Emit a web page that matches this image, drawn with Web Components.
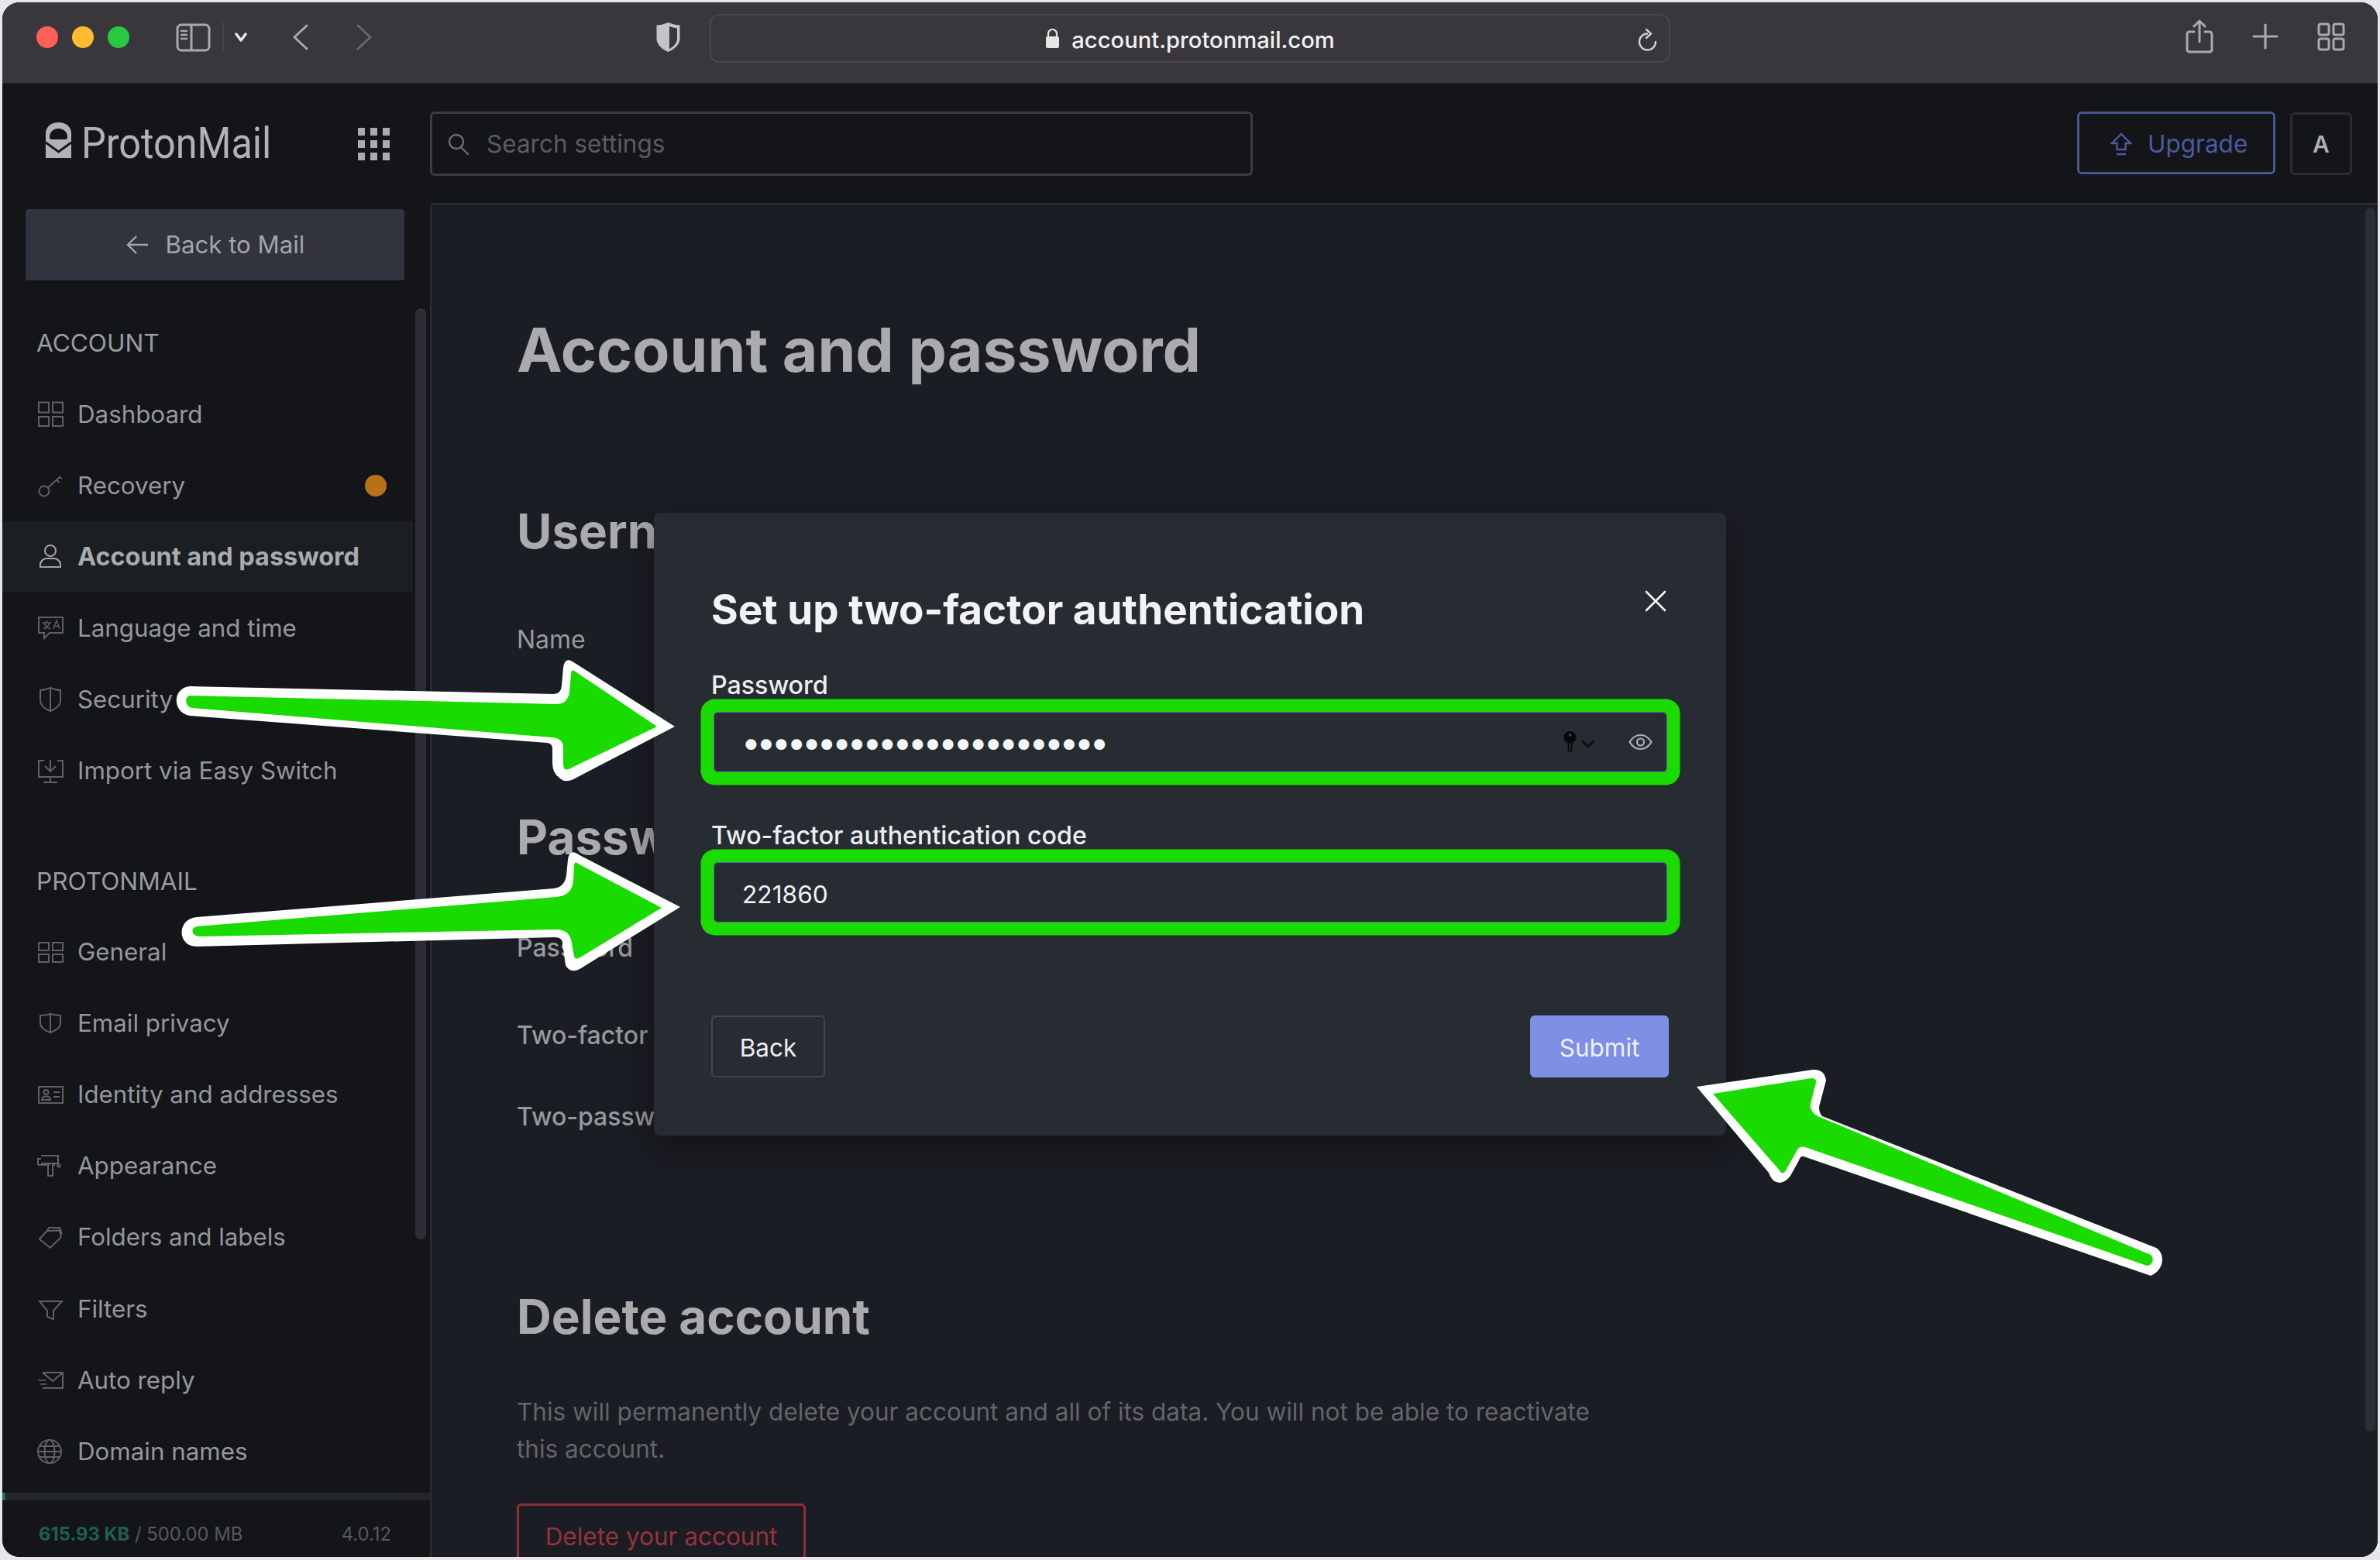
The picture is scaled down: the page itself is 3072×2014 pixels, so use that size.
<!DOCTYPE html>
<html lang="en"><head><meta charset="utf-8"><title>Account and password</title>
<style>
html,body{margin:0;padding:0;width:3072px;height:2014px;overflow:hidden;background:#e7e7e9;font-family:Inter,"Liberation Sans",sans-serif}
</style></head>
<body>
<browser-window>
  <mac-titlebar slot="bar" url="account.protonmail.com"></mac-titlebar>
  <app-header slot="header"></app-header>
  <side-nav slot="nav">
    <back-button>Back to Mail</back-button>
    <nav-label>ACCOUNT</nav-label>
    <nav-item icon="grid">Dashboard</nav-item>
    <nav-item icon="key" badge>Recovery</nav-item>
    <nav-item icon="user" active>Account and password</nav-item>
    <nav-item icon="lang">Language and time</nav-item>
    <nav-item icon="shield">Security</nav-item>
    <nav-item icon="import">Import via Easy Switch</nav-item>
    <nav-label style="margin-top:50px">PROTONMAIL</nav-label>
    <nav-item icon="grid2">General</nav-item>
    <nav-item icon="shield2">Email privacy</nav-item>
    <nav-item icon="card">Identity and addresses</nav-item>
    <nav-item icon="roller">Appearance</nav-item>
    <nav-item icon="tag">Folders and labels</nav-item>
    <nav-item icon="filter">Filters</nav-item>
    <nav-item icon="mail">Auto reply</nav-item>
    <nav-item icon="globe">Domain names</nav-item>
  </side-nav>
  <settings-panel slot="main"></settings-panel>
</browser-window>
<tfa-modal></tfa-modal>
<annotation-arrows></annotation-arrows>

<script>
const ICONS={
grid:'<rect x="3" y="2.5" width="13" height="13"/><rect x="21" y="2.5" width="13" height="13"/><rect x="3" y="21" width="13" height="12"/><rect x="21" y="21" width="13" height="12"/>',
grid2:'<rect x="3" y="6" width="13" height="10"/><rect x="21" y="6" width="13" height="10"/><rect x="3" y="21" width="13" height="10"/><rect x="21" y="21" width="13" height="10"/>',
key:'<circle cx="10" cy="25" r="6.5"/><path d="M15 20.5 31 6M26 10.5l3.5 3.5M30 7l3 2"/>',
user:'<circle cx="18" cy="10" r="7"/><path d="M5 31v-3c0-5 5-8 8-8h10c3 0 8 3 8 8v3Z"/>',
lang:'<path d="M3 4h31v20H17l-7 7v-7H3Z"/><path d="M8 11h11M13.5 8v3M10 11c1 4 5 7 8 8M17 11c-1 4-5 7-8 8M22 19l4-11 4 11M23.5 15.5h5" stroke-width="1.4"/>',
shield:'<path d="M18 3c5 2 9 3 13 3v13c0 7-7 12-13 14-6-2-13-7-13-14V6c4 0 8-1 13-3ZM18 3v30"/>',
shield2:'<path d="M18 6c5 1.500 9 2 13 2v10c0 6-7 10-13 12-6-2-13-6-13-12V8c4 0 8-.5 13-2ZM18 6v24"/>',
import:'<path d="M10 5H3v21h31V5h-7M18 4v15M11 12l7 7 7-7M18 26v7M9 33h18"/>',
card:'<rect x="3" y="8" width="31" height="21"/><circle cx="12.500" cy="15" r="3"/><path d="M7 25c0-3 2.500-4.500 5.500-4.500S18 22 18 25ZM22 15h8M22 21h8"/>',
roller:'<path d="M6 5h22v10H6M6 9H2v8M2 17h15M15 17v14h6V17h3"/><circle cx="29" cy="18" r="1.800"/>',
tag:'<path d="M4 20 14 10h16l2 6-1 4-14 12Z" transform="rotate(-3 18 20)"/><path d="M14 10l2-4h14l3 8"/>',
filter:'<path d="M4 8h29L22 20v11l-8-3v-8Z"/>',
mail:'<path d="M8 8h26v20H8M8 8l13 11L34 8"/><path d="M2 18h10M5 23h8M9 28h6" stroke-width="1.600"/>',
globe:'<circle cx="17" cy="18" r="15"/><ellipse cx="17" cy="18" rx="6.500" ry="15"/><path d="M2 18h30M4 11h26M4 25h26"/>'
};
const def=(n,html,extra)=>customElements.define(n,class extends HTMLElement{
  constructor(){super();const s=this.attachShadow({mode:'open'});s.innerHTML=typeof html==='function'?html(this):html;if(extra)extra.call(this,s)}
});

/* outer window */
def('browser-window',`<style>
:host{display:grid;position:absolute;left:3px;top:3px;width:3066px;height:2007px;grid-template-columns:552px 1fr;grid-template-rows:106px 153px 1fr;border-radius:22px;overflow:hidden;background:#131519}
.bar{grid-column:1/3}.header{grid-column:1/3}
</style>
<div class="bar"><slot name="bar"></slot></div>
<div class="header"><slot name="header"></slot></div>
<slot name="nav"></slot><slot name="main"></slot>`);

/* browser chrome */
customElements.define('mac-titlebar',class extends HTMLElement{
  connectedCallback(){
    if(this.shadowRoot)return;
    const s=this.attachShadow({mode:'open'});
    s.innerHTML=`<style>
    :host{display:flex;align-items:center;height:106px;background:#39373c;border-bottom:2px solid #1d1d20;box-sizing:border-box;position:relative;padding-bottom:14px;padding-left:44px;color:#a9a9ab}
    .dot{width:28px;height:28px;border-radius:50%;margin-right:18px}
    svg{display:block;fill:none;stroke:currentColor;stroke-linecap:round;stroke-linejoin:round;flex:none}
    .url{position:absolute;left:913px;top:15px;width:1240px;height:63px;box-sizing:border-box;border:2px solid #4a484d;border-radius:13px;display:flex;align-items:center;justify-content:center;gap:15px;color:#f0f0f0;font:500 29.200px Inter,"Liberation Sans",sans-serif;padding-top:3px}
    .reload{position:absolute;right:13px;top:17px;color:#d0d0d2}
    .right{position:absolute;left:2817px;top:22px;display:flex;align-items:center}
    </style>
    <span class="dot" style="background:#fe5f57"></span><span class="dot" style="background:#febc2e"></span><span class="dot" style="background:#28c840;margin-right:0"></span>
    <svg style="margin-left:60px" width="45" height="37" viewBox="0 0 45 37" stroke-width="3"><rect x="2" y="2" width="41" height="33" rx="5"/><path d="M20 2v33"/><path d="M7 10h7M7 15h7M7 20h7" stroke-width="2.500"/></svg>
    <svg style="margin-left:15px" width="2" height="40"><path d="M1 0v40" stroke="#4a484d" stroke-width="1.500"/></svg>
    <svg style="margin-left:14px;color:#e8e8e8" width="16" height="12" viewBox="0 0 16 12" stroke-width="3.500"><path d="M2 2l6 8 6-8"/></svg>
    <svg style="margin-left:58px" width="21" height="34" viewBox="0 0 21 34" stroke-width="3"><path d="M19 2 3 17l16 15"/></svg>
    <svg style="margin-left:62px;color:#67666a" width="21" height="34" viewBox="0 0 21 34" stroke-width="3"><path d="M2 2l16 15L2 32"/></svg>
    <svg style="margin-left:365px;stroke:none" width="33" height="40" viewBox="0 0 33 40"><path fill="#c4c4c6" d="M16.500 1c6 2.500 11 3.500 15 3.500V22c0 8-8 14-15 17-7-3-15-9-15-17V4.500C5.500 4.500 10.500 3.500 16.500 1Z"/><path fill="#39373c" d="M18 6c4 1.500 7 2 10 2.300V22c0 6-5 10.500-10 13.200Z"/></svg>
    <div class="url"><svg style="stroke:none;margin-top:-3px" width="19" height="27" viewBox="0 0 19 27"><path d="M4 12V7.500a5.500 5.500 0 0 1 11 0V12" fill="none" stroke="#e6e6e6" stroke-width="2.200"/><rect x="1" y="11" width="17" height="15" rx="2" fill="#e6e6e6"/></svg><span>${this.getAttribute('url')}</span>
      <svg class="reload" width="28" height="30" viewBox="0 0 28 30" stroke-width="2.400"><path d="M13 6.500A10.500 10.500 0 1 0 24 17"/><path d="M12 1 18 6.500 12 12"/></svg></div>
    <div class="right">
      <svg width="38" height="44" viewBox="0 0 38 44" stroke-width="3"><path d="M12 16H6a3 3 0 0 0-3 3v20a3 3 0 0 0 3 3h26a3 3 0 0 0 3-3V19a3 3 0 0 0-3-3h-6M19 29V3M12 9l7-7 7 7"/></svg>
      <svg style="margin-left:49px" width="34" height="34" viewBox="0 0 34 34" stroke-width="3.200"><path d="M17 2v30M2 17h30"/></svg>
      <svg style="margin-left:50px" width="36" height="37" viewBox="0 0 36 37" stroke-width="3"><rect x="2" y="2" width="13" height="14" rx="2.500"/><rect x="21" y="2" width="13" height="14" rx="2.500"/><rect x="2" y="21" width="13" height="14" rx="2.500"/><rect x="21" y="21" width="13" height="14" rx="2.500"/></svg>
    </div>`;
  }
});

/* app header */
def('app-header',`<style>
:host{display:flex;align-items:center;height:153px;background:#131519;box-sizing:border-box;padding-left:56px;color:#b0b2b4;position:relative}
.word{font:400 55px/60px Roboto,Inter,sans-serif;color:#b0b2b4;display:inline-block;transform:scaleX(.915);transform-origin:0 50%;margin-left:13px;width:242px;white-space:nowrap;margin-top:-2px}
svg{flex:none;display:block}
.apps{margin-left:115px;display:grid;grid-template-columns:repeat(3,9px);grid-auto-rows:10px;gap:6px 7px;width:41px}
.apps i{background:#a9abad;display:block}
.search{margin-left:52px;width:1062px;height:83px;box-sizing:border-box;border:3px solid #3a3c42;border-radius:6px;display:flex;align-items:center;padding-left:19px;gap:21px;color:#5a5c62;font:400 31.500px Inter,sans-serif}
.upgrade{position:absolute;left:2678px;top:35px;width:256px;height:81px;box-sizing:border-box;border:3px solid #48558f;border-radius:6px;color:#4b59a0;font:400 31.500px Inter,sans-serif;display:flex;align-items:center;padding:2px 0 0 40px;gap:20px}
.a{position:absolute;left:2953px;top:36px;width:80px;height:81px;box-sizing:border-box;border:3px solid #2a2c30;border-radius:6px;color:#aeb0b3;font:600 30px Inter,sans-serif;display:flex;align-items:center;justify-content:center}
</style>
<svg width="33" height="46" viewBox="0 0 33 46" style="margin-top:-10px"><path fill="#b0b2b4" d="M0 14C0 6 7 0 16.500 0S33 6 33 14V46H0Z"/><path fill="#131519" d="M5 19c0-7 5-11 11.500-11S28 12 28 19c0 2-1 3-2.500 3h-18C6 22 5 21 5 19Z"/><path fill="none" stroke="#131519" stroke-width="3" d="M0 26l16.500 12L33 26"/></svg>
<span class="word">ProtonMail</span>
<div class="apps"><i></i><i></i><i></i><i></i><i></i><i></i><i></i><i></i><i></i></div>
<div class="search"><svg width="30" height="28" viewBox="0 0 30 28" fill="none" stroke="#6b6d73" stroke-width="2.400" stroke-linecap="round"><circle cx="12" cy="11" r="9"/><path d="M18 18l9 9"/></svg><span>Search settings</span></div>
<div class="upgrade"><svg width="28" height="30" viewBox="0 0 28 30" fill="none" stroke="#4b59a0" stroke-width="2.400"><path d="M14 2 2 14h6.500v8h11v-8H26ZM8 28h12"/></svg><span>Upgrade</span></div>
<div class="a">A</div>`);

/* sidebar */
def('side-nav',`<style>
:host{display:block;position:relative;background:#131519;height:1748px;overflow:hidden;padding-top:8px;box-sizing:border-box;color:#9a9c9f}
.thumb{position:absolute;left:533px;top:136px;width:14px;height:1202px;background:#2b2e37;border-radius:7px}
.foot{position:absolute;left:0;right:0;bottom:0;height:83px;font:400 23.800px/29px Inter,sans-serif;color:#565960}
.bar{height:10px;background:#23262d;position:relative}
.bar i{position:absolute;left:0;top:0;bottom:0;width:4px;background:#1f6e58}
.row{display:flex;padding:29px 50px 0 47px;justify-content:space-between;white-space:pre}
b{color:#1f5f4e;font-weight:700}
</style>
<slot></slot><div class="thumb"></div>
<div class="foot"><div class="bar"><i></i></div><div class="row"><span><b>615.93 KB</b> / 500.00 MB</span><span>4.0.12</span></div></div>`);

def('back-button',`<style>
:host{display:flex;align-items:center;justify-content:center;gap:22px;margin-left:30px;width:489px;height:92px;background:#31343e;border-radius:4px;color:#a3a5a9;font:400 31.200px Inter,sans-serif;margin-bottom:34.500px}
</style><svg width="30" height="26" viewBox="0 0 30 26" fill="none" stroke="#a3a5a9" stroke-width="2.400"><path d="M29 13H3M14 2 3 13l11 11"/></svg><slot></slot>`);

def('nav-label',`<style>:host{display:flex;align-items:center;height:92px;padding-left:44px;font:400 31.600px Inter,sans-serif;color:#9a9c9f}</style><slot></slot>`);

customElements.define('nav-item',class extends HTMLElement{
  connectedCallback(){
    if(this.shadowRoot)return;
    const s=this.attachShadow({mode:'open'});
    const act=this.hasAttribute('active');
    s.innerHTML=`<style>
    :host{display:flex;align-items:center;height:92.100px;width:530px;box-sizing:border-box;padding-left:44px;font:${act?'700 32.400px':'400 31.300px'} Inter,sans-serif;color:${act?'#a9abad':'#95979b'};position:relative;${act?'background:#1b1e23;':''}}
    svg{width:36px;height:36px;flex:none;margin-right:17px;fill:none;stroke:#5d6066;stroke-width:2;stroke-linejoin:miter}
    ${act?'svg{stroke:#a0a2a5}':''}
    .b{position:absolute;left:468px;top:32px;width:28px;height:28px;border-radius:50%;background:#b9701a}
    </style><svg viewBox="0 0 36 36">${ICONS[this.getAttribute('icon')]||''}</svg><slot></slot>${this.hasAttribute('badge')?'<span class="b"></span>':''}`;
  }
});

/* main settings page */
def('settings-panel',`<style>
:host{display:block;background:#1a1d23;border-top:2px solid #2d2f35;border-left:2px solid #2d2f35;border-top-left-radius:6px;box-sizing:border-box;height:1748px;overflow:hidden;padding-left:110px;position:relative;color:#a9abad}
h1,h2,p,div{margin:0}
h1{font:700 78.600px/80px Inter,sans-serif;margin-top:148px}
h2{font:700 62px/72px Inter,sans-serif}
.l{font:400 32px/48px Inter,sans-serif;color:#98999d;white-space:nowrap}
.m{font-weight:500}
p{font:400 31.500px/48px Inter,sans-serif;color:#62656a;width:1420px}
.del{margin-top:46px;width:373px;height:90px;box-sizing:border-box;border:3px solid #8e2f38;border-radius:6px;color:#97323c;font:400 31.500px/80px Inter,sans-serif;text-align:center}
.thumb{position:absolute;right:3px;top:4px;width:13px;height:1580px;background:#2b2e37;border-radius:7px}
</style>
<h1>Account and password</h1>
<h2 style="margin-top:158px">Usern</h2>
<div class="l" style="margin-top:80px">Name</div>
<h2 style="margin-top:195px">Passw</h2>
<div class="l m" style="margin-top:83px">Password</div>
<div class="l m" style="margin-top:65px">Two-factor</div>
<div class="l m" style="margin-top:57px">Two-passw</div>
<h2 style="margin-top:198px">Delete account</h2>
<p style="margin-top:63px">This will permanently delete your account and all of its data. You will not be able to reactivate this account.</p>
<div class="del">Delete your account</div>
<div class="thumb"></div>`);

/* dialog */
def('modal-field',t=>`<style>
:host{display:block}
label{display:block;font:500 32.200px/40px Inter,sans-serif;color:#eceef0;margin-left:0;margin-bottom:14px}
.box{height:78px;margin:0 2px 0 3px;box-sizing:border-box;border:1px solid #5f6cb4;border-radius:6px;box-shadow:0 0 0 16.500px #1adb00;display:flex;align-items:center;padding:4px 18px 0 36px;color:#f2f3f4;font:400 31.700px Inter,sans-serif;position:relative}
::slotted(*){flex:1}
</style><label><slot name="label"></slot></label><div class="box"><slot></slot></div>`);

def('tfa-modal',`<style>
:host{display:block;position:absolute;left:844px;top:662px;width:1384px;height:804px;box-sizing:border-box;background:#272c33;border-radius:8px;padding:90px 74px 74px;box-shadow:0 18px 44px rgba(8,9,10,.45);color:#f2f3f4}
h2{margin:0 0 43px 0;font:700 53px/70px Inter,sans-serif;color:#f2f3f5}
.x{position:absolute;left:1279px;top:100px;display:block}
.actions{display:flex;justify-content:space-between;margin-top:120px}
.btn{height:80px;box-sizing:border-box;border-radius:6px;display:flex;align-items:center;justify-content:center;font:400 31.500px Inter,sans-serif;padding-top:2px}
.back{width:147px;border:2.500px solid #43464e;color:#edeef0}
.submit{width:179px;background:#7f8fe6;color:#eff1ff}
.pw{display:flex;align-items:center;margin-top:-4px}
.dots{flex:1;font:400 44px/40px Inter,sans-serif;letter-spacing:-5.200px;margin-left:-1px;white-space:nowrap;color:#f6f6f7}
.tail{display:flex;align-items:center}
svg{display:block;flex:none}
modal-field+modal-field{margin-top:62px}
</style>
<h2>Set up two-factor authentication</h2>
<svg class="x" width="28" height="28" viewBox="0 0 28 28" fill="none" stroke="#f2f3f4" stroke-width="2.600" stroke-linecap="round"><path d="M2 2l24 24M26 2 2 26"/></svg>
<modal-field><span slot="label">Password</span>
  <div class="pw"><span class="dots">••••••••••••••••••••••••</span><span class="tail">
    <svg width="17" height="28" viewBox="0 0 17 28"><path fill="#07080a" d="M8.500 0a8 8 0 0 1 8 8c0 3.500-2.500 6-5 7.300V25l-3 3-3-3V15.300C3 14 .5 11.500.5 8a8 8 0 0 1 8-8Z"/><circle cx="8.500" cy="5" r="1.800" fill="#3b4048"/><path d="M8.500 15v10" stroke="#3b4048" stroke-width="1.200"/></svg>
    <svg style="margin-left:6px;margin-top:4px" width="18" height="11" viewBox="0 0 18 11" fill="none" stroke="#0a0b0d" stroke-width="2.600"><path d="M1.500 1.500 9 9l7.500-7.500"/></svg>
    <svg style="margin-left:43px" width="31" height="22" viewBox="0 0 31 22" fill="none" stroke="#b0b2b5" stroke-width="2.200"><path d="M1.500 11C5 5 10 2 15.500 2S26 5 29.500 11C26 17 21 20 15.500 20S5 17 1.500 11Z"/><circle cx="15.500" cy="11" r="4.500"/></svg>
    </span></div></modal-field>
<modal-field><span slot="label">Two-factor authentication code</span><span>221860</span></modal-field>
<div class="actions"><div class="btn back">Back</div><div class="btn submit">Submit</div></div>`);

/* annotation arrows, drawn over everything on a free canvas */
def('annotation-arrows',`<style>:host{display:block;position:absolute;left:0;top:0;width:3072px;height:2014px;pointer-events:none}svg{display:block}</style>
<svg width="3072" height="2014" viewBox="0 0 3072 2014">
<g fill="#fff">
<path d="M245 886 715 896Q724 896 725 885L727 862Q729 846 742 856L871 938 742 1005Q729 1012 722 1004 713 998 713 985V966Q713 960 706 959L245 924C222 920 222 888 245 886Z"/>
<path d="M254 1184 715 1147Q729 1145 731 1130L733 1110Q735 1094 748 1104L878 1171 750 1250Q736 1258 730 1246L726 1218Q726 1210 716 1210L254 1222C228 1222 228 1186 254 1184Z"/>
<path d="M2190 1403 2340 1381Q2355 1380 2357 1395L2349 1425Q2346 1434 2352 1441L2783 1611C2795 1618 2794 1640 2776 1647L2328 1493Q2324 1492 2322 1498L2311 1518Q2300 1532 2289 1524 2285 1520 2283 1514Z"/>
</g>
<g fill="#1adb00">
<path d="M246 898 718 909Q733 909 735 893L737 871Q737 862 744 868L848 938 736 992Q727 997 727 986V965Q727 953 712 952L248 914C238 912 238 898 246 898Z"/>
<path d="M254 1196 718 1158Q739 1156 740 1136L741 1118Q741 1110 748 1116L854 1172 749 1236Q742 1240 741 1234L738 1218Q736 1200 718 1200L258 1209C246 1208 246 1198 254 1196Z"/>
<path d="M2211 1412 2338 1392Q2345 1392 2344 1397L2337 1425Q2335 1434 2346 1441L2776 1620C2781 1624 2779 1634 2771 1634L2330 1481Q2322 1479 2319 1486L2305 1511Q2300 1518 2297 1511Z"/>
</g></svg>`);
</script>
</body></html>
